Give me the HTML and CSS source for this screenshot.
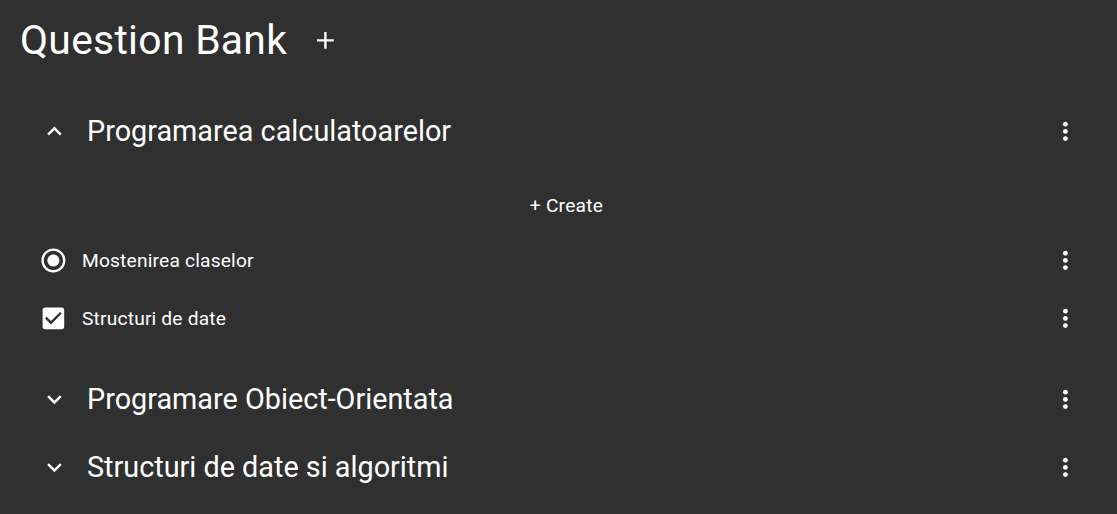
FILE: index.html
```html
<!DOCTYPE html>
<html>
<head>
<meta charset="utf-8">
<link rel="stylesheet" href="styles.css">
</head>
<body>
<div class="page">
  <header class="title-row">
    <h1 class="title">Question Bank</h1>
    <button class="add-btn" aria-label="add">
      <svg class="icon" viewBox="0 0 24 24"><path d="M19 13h-6v6h-2v-6H5v-2h6V5h2v6h6v2z" fill="#fff"/></svg>
    </button>
  </header>

  <section class="panel">
    <div class="panel-header">
      <svg class="icon chev" viewBox="0 0 24 24"><path d="M7.41 15.41L12 10.83l4.59 4.58L18 14l-6-6-6 6z" fill="#fff"/></svg>
      <span class="panel-title">Programarea calculatoarelor</span>
      <svg class="icon kebab" viewBox="0 0 24 24"><circle cx="12" cy="6" r="2" fill="#fff"/><circle cx="12" cy="12" r="2" fill="#fff"/><circle cx="12" cy="18" r="2" fill="#fff"/></svg>
    </div>
    <div class="panel-body">
      <div class="create">+ Create</div>
      <div class="item">
        <svg class="icon item-icon" viewBox="0 0 24 24"><path d="M12 7c-2.76 0-5 2.24-5 5s2.240 5 5 5 5-2.24 5-5-2.24-5-5-5zm0-5C6.48 2 2 6.48 2 12s4.48 10 10 10 10-4.48 10-10S17.52 2 12 2zm0 18c-4.420 0-8-3.58-8-8s3.58-8 8-8 8 3.58 8 8-3.58 8-8 8z" fill="#fff"/></svg>
        <span class="item-text">Mostenirea claselor</span>
        <svg class="icon kebab" viewBox="0 0 24 24"><circle cx="12" cy="6" r="2" fill="#fff"/><circle cx="12" cy="12" r="2" fill="#fff"/><circle cx="12" cy="18" r="2" fill="#fff"/></svg>
      </div>
      <div class="item">
        <svg class="icon item-icon" viewBox="0 0 24 24"><path d="M19 3H5c-1.11 0-2 .9-2 2v14c0 1.1.89 2 2 2h14c1.11 0 2-.9 2-2V5c0-1.1-.89-2-2-2zm-9 14l-5-5 1.41-1.41L10 14.17l7.59-7.59L19 8l-9 9z" fill="#fff"/></svg>
        <span class="item-text">Structuri de date</span>
        <svg class="icon kebab" viewBox="0 0 24 24"><circle cx="12" cy="6" r="2" fill="#fff"/><circle cx="12" cy="12" r="2" fill="#fff"/><circle cx="12" cy="18" r="2" fill="#fff"/></svg>
      </div>
    </div>
  </section>

  <section class="panel">
    <div class="panel-header">
      <svg class="icon chev" viewBox="0 0 24 24"><path d="M7.41 8.59L12 13.17l4.59-4.58L18 10l-6 6-6-6z" fill="#fff"/></svg>
      <span class="panel-title">Programare Obiect-Orientata</span>
      <svg class="icon kebab" viewBox="0 0 24 24"><circle cx="12" cy="6" r="2" fill="#fff"/><circle cx="12" cy="12" r="2" fill="#fff"/><circle cx="12" cy="18" r="2" fill="#fff"/></svg>
    </div>
  </section>

  <section class="panel">
    <div class="panel-header">
      <svg class="icon chev" viewBox="0 0 24 24"><path d="M7.41 8.59L12 13.17l4.59-4.58L18 10l-6 6-6-6z" fill="#fff"/></svg>
      <span class="panel-title">Structuri de date si algoritmi</span>
      <svg class="icon kebab" viewBox="0 0 24 24"><circle cx="12" cy="6" r="2" fill="#fff"/><circle cx="12" cy="12" r="2" fill="#fff"/><circle cx="12" cy="18" r="2" fill="#fff"/></svg>
    </div>
  </section>
</div>
</body>
</html>
```
FILE: styles.css
```css
html, body {
  margin: 0;
  padding: 0;
  background: #303030;
  color: #fff;
  font-family: Roboto, "Noto Sans", sans-serif;
}
.page {
  padding: 0 20px;
  height: 514px;
  overflow: hidden;
}
.icon {
  width: 28.8px;
  height: 28.8px;
  flex: none;
  display: block;
}
.title-row {
  display: flex;
  align-items: center;
  height: 80px;
}
.title {
  margin: 0;
  font-size: 40.8px;
  font-weight: 400;
  letter-spacing: 0.3px;
  line-height: 1;
}
.add-btn {
  background: none;
  border: none;
  padding: 0;
  margin-left: 24px;
  display: flex;
}
.panel-header {
  display: flex;
  align-items: center;
  height: 68px;
  padding: 0 17.6px 0 19.6px;
}
.panel:first-of-type .panel-header { margin-top: 17px; }
.chev {
  margin-right: 18.6px;
}
.panel-title {
  flex: 1;
  font-size: 28.8px;
}
.panel-body {
  padding-bottom: 18px;
}
.create {
  text-align: center;
  font-size: 19.2px;
  letter-spacing: 0.25px;
  line-height: 23px;
  padding: 29px 0 14px 16px;
}
.item {
  display: flex;
  align-items: center;
  height: 58px;
  padding: 0 17.6px 0 19px;
}
.item-icon {
  margin-right: 14.2px;
}
.item-text {
  flex: 1;
  font-size: 19.2px;
  letter-spacing: 0.18px;
}
```
